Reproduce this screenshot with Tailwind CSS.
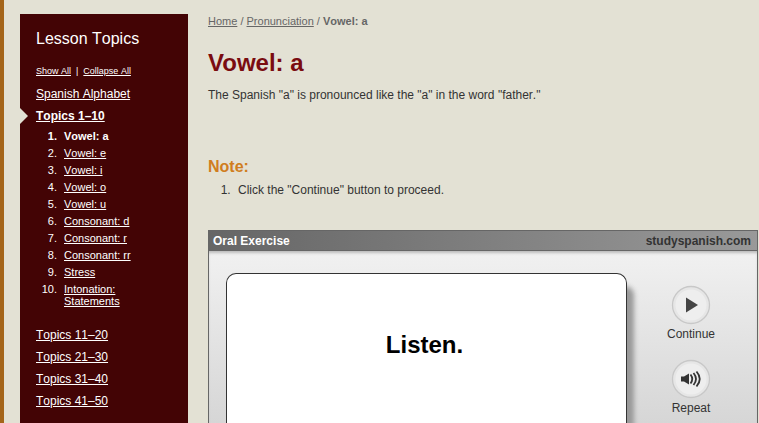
<!DOCTYPE html>
<html lang="en">
<head>
    <meta charset="UTF-8">
    <meta name="viewport" content="width=device-width, initial-scale=1.0">
    <title>Vowel: a</title>
    <script src="https://cdn.jsdelivr.net/npm/@tailwindcss/browser@4"></script>
</head>
<body class="bg-[#e3e1d4] font-['Liberation_Sans',Arial,sans-serif] text-[12px] leading-4 text-[#333] [font-kerning:none]">
    <div class="flex min-h-screen border-l-4 border-[#a4651a] pl-4">
        <!-- Sidebar -->
        <nav class="relative mt-[14px] w-[168px] shrink-0 bg-[#430405] px-4 pt-[13px] text-white">
            <h2 class="text-[16px] leading-6">Lesson Topics</h2>
            <p class="mt-3 flex gap-[5px] text-[9px] leading-4">
                <a href="#" class="underline">Show All</a>
                <span>|</span>
                <a href="#" class="underline">Collapse All</a>
            </p>
            <ul class="mt-1 leading-[22px]">
                <li><a href="#" class="underline">Spanish Alphabet</a></li>
                <li class="relative">
                    <span class="absolute top-[3px] -left-4 h-4 w-2 bg-[#e3e1d4] [clip-path:polygon(0_0,100%_50%,0_100%)]"></span>
                    <a href="#" class="font-bold underline">Topics 1–10</a>
                    <ol class="mt-[3px] mb-[17px] list-decimal space-y-[5px] pl-6 text-[11px] leading-[12px]">
                        <li class="pl-1 font-bold">Vowel: a</li>
                        <li class="pl-1"><a href="#" class="underline">Vowel: e</a></li>
                        <li class="pl-1"><a href="#" class="underline">Vowel: i</a></li>
                        <li class="pl-1"><a href="#" class="underline">Vowel: o</a></li>
                        <li class="pl-1"><a href="#" class="underline">Vowel: u</a></li>
                        <li class="pl-1"><a href="#" class="underline">Consonant: d</a></li>
                        <li class="pl-1"><a href="#" class="underline">Consonant: r</a></li>
                        <li class="pl-1"><a href="#" class="underline">Consonant: rr</a></li>
                        <li class="pl-1"><a href="#" class="underline">Stress</a></li>
                        <li class="pl-1"><a href="#" class="underline">Intonation:<br>Statements</a></li>
                    </ol>
                </li>
                <li><a href="#" class="underline">Topics 11–20</a></li>
                <li><a href="#" class="underline">Topics 21–30</a></li>
                <li><a href="#" class="underline">Topics 31–40</a></li>
                <li><a href="#" class="underline">Topics 41–50</a></li>
            </ul>
        </nav>

        <!-- Main content -->
        <main class="flex min-w-0 flex-1 flex-col pt-[13px] pr-px pl-5">
            <p class="text-[11px] text-[#666]">
                <a href="#" class="underline">Home</a> / <a href="#" class="underline">Pronunciation</a> / <b>Vowel: a</b>
            </p>
            <h1 class="mt-5 text-[24px] leading-7 font-bold text-[#7a0c10] [font-kerning:normal]">Vowel: a</h1>
            <p class="mt-[10px]">The Spanish "a" is pronounced like the "a" in the word "father."</p>

            <h3 class="mt-[54px] text-[16px] leading-5 font-bold text-[#d07d20]">Note:</h3>
            <ol class="mt-[5px] list-decimal pl-[26px]">
                <li class="pl-1">Click the "Continue" button to proceed.</li>
            </ol>

            <!-- Oral exercise player -->
            <section class="mt-8 flex flex-1 flex-col border border-b-0 border-[#666]">
                <header class="flex h-5 items-center justify-between border-b border-[#666] bg-linear-to-r from-[#666] to-[#999] px-1 pr-[6px] font-bold">
                    <h2 class="text-white">Oral Exercise</h2>
                    <span class="text-[#333]">studyspanish.com</span>
                </header>
                <div class="flex flex-1 bg-linear-to-b from-[#f1f1f1] to-[#d6d6d6] pt-[22px] pl-[17px] shadow-[inset_0_3px_3px_-1px_#bbb]">
                    <div class="flex-1 rounded-t-[10px] border border-b-0 border-[#333] bg-white pt-[57px] pr-1 text-center text-[24px] leading-7 font-bold text-black shadow-[8px_12px_5px_-1px_#999]">Listen.</div>
                    <div class="flex w-[130px] flex-col items-center gap-[17px] pt-3 pr-[2px] text-[12px] leading-4">
                        <button type="button" class="flex flex-col items-center gap-px">
                            <svg class="size-10" viewBox="0 0 40 40">
                                <circle cx="20" cy="20" r="18.5" fill="#e6e6e6" stroke="#c8c8c8" stroke-width="1.3"/>
                                <circle cx="20" cy="20" r="15.5" fill="#eee"/>
                                <path d="M15 12.5v15L27 20z" fill="#444"/>
                            </svg>
                            Continue
                        </button>
                        <button type="button" class="flex flex-col items-center gap-px">
                            <svg class="size-10" viewBox="0 0 40 40">
                                <circle cx="20" cy="20" r="18.5" fill="#e6e6e6" stroke="#c8c8c8" stroke-width="1.3"/>
                                <circle cx="20" cy="20" r="15.5" fill="#eee"/>
                                <path d="M10 17.5h3l5-3v11l-5-3h-3z" fill="#333"/>
                                <path d="M19.500 15.500q3.500 4.500 0 9M22.500 14q5 6 0 12M25.500 12.500q6.500 7.500 0 15" fill="none" stroke="#333" stroke-width="1.8"/>
                            </svg>
                            Repeat
                        </button>
                    </div>
                </div>
            </section>
        </main>
    </div>
</body>
</html>
